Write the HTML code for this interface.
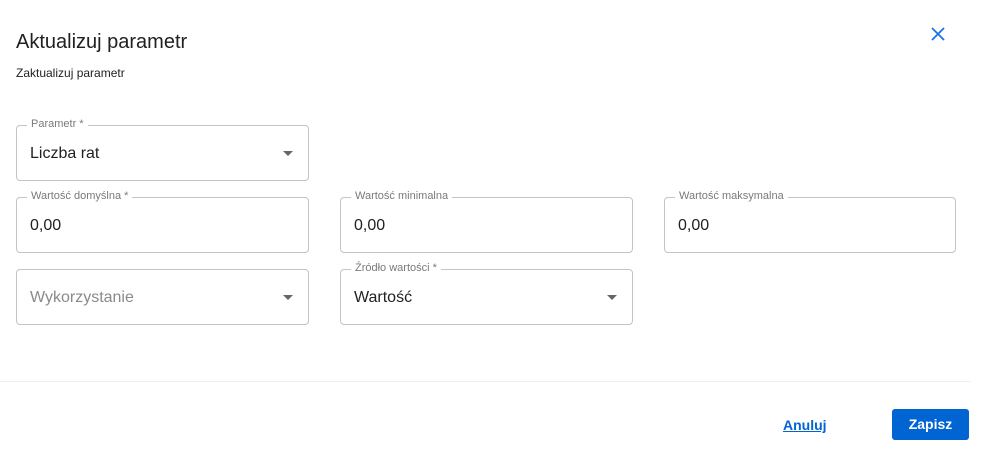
<!DOCTYPE html>
<html><head><meta charset="utf-8"><style>
body{margin:0;width:990px;height:469px;background:#fff;font-family:"Liberation Sans",sans-serif;position:relative;overflow:hidden}
.t{position:absolute;left:16px;top:31px;font-size:20px;color:#212121}
.s{position:absolute;left:16px;top:66px;font-size:12px;color:#212121}
.f{position:absolute;width:290px;height:54px;border:1px solid #c4c4c4;border-radius:4px;box-sizing:border-box}
.f .l{position:absolute;top:-8px;left:10px;padding:0 4px;background:#fff;font-size:11px;color:#7a7a7a}
.f .v{position:absolute;left:13px;top:19px;font-size:16px;color:#212121}
.f .v.p{color:#8a8a8a}
.f .a{position:absolute;right:15px;top:25px;width:0;height:0;border-left:5px solid transparent;border-right:5px solid transparent;border-top:5px solid #666}
</style></head><body>
<div class="t">Aktualizuj parametr</div>
<div class="s">Zaktualizuj parametr</div>
<svg style="position:absolute;left:931px;top:27px" width="14" height="14" viewBox="0 0 14 14"><path d="M1 1L13 13M13 1L1 13" stroke="#1a73e8" stroke-width="1.8"/></svg>
<div class="f" style="left:16px;top:125px;width:293px;height:56px"><span class="l">Parametr *</span><span class="v">Liczba rat</span><span class="a"></span></div>
<div class="f" style="left:16px;top:197px;width:293px;height:56px"><span class="l">Wartość domyślna *</span><span class="v">0,00</span></div>
<div class="f" style="left:340px;top:197px;width:293px;height:56px"><span class="l">Wartość minimalna</span><span class="v">0,00</span></div>
<div class="f" style="left:664px;top:197px;width:292px;height:56px"><span class="l">Wartość maksymalna</span><span class="v">0,00</span></div>
<div class="f" style="left:16px;top:269px;width:293px;height:56px"><span class="v p">Wykorzystanie</span><span class="a"></span></div>
<div class="f" style="left:340px;top:269px;width:293px;height:56px"><span class="l">Źródło wartości *</span><span class="v">Wartość</span><span class="a"></span></div>
<div style="position:absolute;left:0;top:381px;width:971px;height:1px;background:#eee"></div>
<a style="position:absolute;left:783px;top:417px;font-size:14px;font-weight:bold;color:#0064d2;text-decoration:underline">Anuluj</a>
<div style="position:absolute;left:892px;top:409px;width:77px;height:31px;background:#0064d2;border-radius:3px;color:#fff;font-size:14px;font-weight:bold;text-align:center;line-height:31px">Zapisz</div>
</body></html>
